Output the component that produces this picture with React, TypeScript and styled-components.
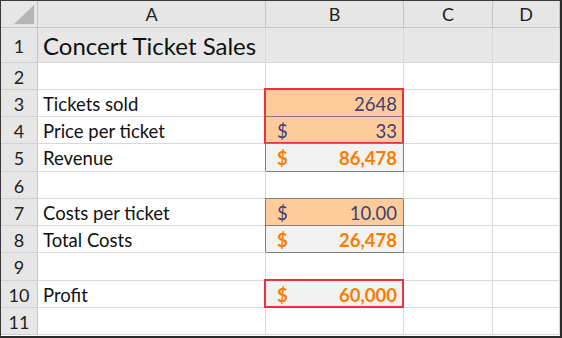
import React from "react";
import styled, { createGlobalStyle } from "styled-components";

const GlobalStyle = createGlobalStyle`
  html, body {
    margin: 0;
    padding: 0;
    background: #ffffff;
  }
  body {
    font-family: Lato, "Open Sans", sans-serif;
  }
`;

const Frame = styled.div`
  width: 562px;
  height: 338px;
  box-sizing: border-box;
  border-top: 1px solid #3a3a3a;
  border-left: 1px solid #3a3a3a;
  border-right: 2px solid #2a2a2a;
  border-bottom: 2px solid #2a2a2a;
  overflow: hidden;
  background: #ffffff;
`;

const Sheet = styled.div`
  display: grid;
  grid-template-columns: 37px 228px 138px 89px 1fr;
  grid-template-rows: 27px 34.5px repeat(10, 27.25px);
`;

const Corner = styled.div`
  background: #e6e6e6;
  border-right: 1px solid #c6c6c6;
  border-bottom: 1px solid #c6c6c6;
  display: flex;
  align-items: flex-end;
  justify-content: flex-end;
  padding: 0 3px 3px 0;
`;

const ColHead = styled.div`
  background: #e6e6e6;
  border-right: 1px solid #c6c6c6;
  border-bottom: 1px solid #c6c6c6;
  display: flex;
  align-items: center;
  justify-content: center;
  font-size: 18px;
  color: #222222;
`;

const RowHead = styled.div`
  background: #e6e6e6;
  border-right: 1px solid #c6c6c6;
  border-bottom: 1px solid #d0d0d0;
  display: flex;
  align-items: center;
  justify-content: center;
  padding-top: 2px;
  font-size: 18px;
  color: #222222;
`;

type CellProps = {
  $kind?: "plain" | "title" | "input" | "calc";
  $red?: string;
};

const fills: Record<string, string> = {
  plain: "#ffffff",
  title: "#e7e7e7",
  input: "#fecc9b",
  calc: "#f2f2f2",
};

const Cell = styled.div<CellProps>`
  position: relative;
  box-sizing: border-box;
  background: ${(p) => fills[p.$kind || "plain"]};
  border-right: 1px solid ${(p) => (p.$kind === "input" || p.$kind === "calc" ? "#7f7f7f" : "#d9d9d9")};
  border-bottom: 1px solid ${(p) => (p.$kind === "input" || p.$kind === "calc" ? "#7f7f7f" : "#d9d9d9")};
  box-shadow: ${(p) => (p.$kind === "input" || p.$kind === "calc" ? "-1px -1px 0 #7f7f7f" : "none")};
  display: flex;
  align-items: center;
  padding: 2px 6px 0 5px;
  font-size: ${(p) => (p.$kind === "title" ? "24px" : "18.5px")};
  color: #111111;
  white-space: nowrap;

  &::after {
    content: "";
    display: ${(p) => (p.$red ? "block" : "none")};
    position: absolute;
    left: -2px;
    right: -1px;
    top: ${(p) => (p.$red && p.$red.includes("t") ? "-2px" : "-1px")};
    bottom: -1px;
    border: 2px solid #f0303a;
    border-top-width: ${(p) => (p.$red && p.$red.includes("t") ? "2px" : "0")};
    border-bottom-width: ${(p) => (p.$red && p.$red.includes("b") ? "2px" : "0")};
    pointer-events: none;
  }
`;

const Money = styled.div<{ $calc?: boolean }>`
  flex: 1;
  display: flex;
  justify-content: space-between;
  padding: 0 0 0 6px;
  color: ${(p) => (p.$calc ? "#fa7d00" : "#3f3f76")};
  font-weight: ${(p) => (p.$calc ? 700 : 400)};
`;

type Row = {
  n: number;
  label?: string;
  kind?: "input" | "calc";
  dollar?: boolean;
  value?: string;
  red?: string;
};

const rows: Row[] = [
  { n: 2 },
  { n: 3, label: "Tickets sold", kind: "input", value: "2648", red: "t" },
  { n: 4, label: "Price per ticket", kind: "input", dollar: true, value: "33", red: "b" },
  { n: 5, label: "Revenue", kind: "calc", dollar: true, value: "86,478" },
  { n: 6 },
  { n: 7, label: "Costs per ticket", kind: "input", dollar: true, value: "10.00" },
  { n: 8, label: "Total Costs", kind: "calc", dollar: true, value: "26,478" },
  { n: 9 },
  { n: 10, label: "Profit", kind: "calc", dollar: true, value: "60,000", red: "tb" },
  { n: 11 },
];

const CornerMark = () => (
  <svg width="20" height="19" viewBox="0 0 20 19">
    <polygon points="20,0 20,19 0,19" fill="#b4b4b4" />
  </svg>
);

export default function App() {
  return (
    <>
      <GlobalStyle />
      <Frame>
        <Sheet>
          <Corner>
            <CornerMark />
          </Corner>
          <ColHead>A</ColHead>
          <ColHead>B</ColHead>
          <ColHead>C</ColHead>
          <ColHead>D</ColHead>

          <RowHead>1</RowHead>
          <Cell $kind="title">Concert Ticket Sales</Cell>
          <Cell $kind="title" />
          <Cell $kind="title" />
          <Cell $kind="title" />

          {rows.map((r) => (
            <React.Fragment key={r.n}>
              <RowHead>{r.n}</RowHead>
              <Cell>{r.label}</Cell>
              <Cell $kind={r.kind} $red={r.red}>
                {r.value && (
                  <Money $calc={r.kind === "calc"}>
                    <span>{r.dollar ? "$" : ""}</span>
                    <span>{r.value}</span>
                  </Money>
                )}
              </Cell>
              <Cell />
              <Cell />
            </React.Fragment>
          ))}
        </Sheet>
      </Frame>
    </>
  );
}
